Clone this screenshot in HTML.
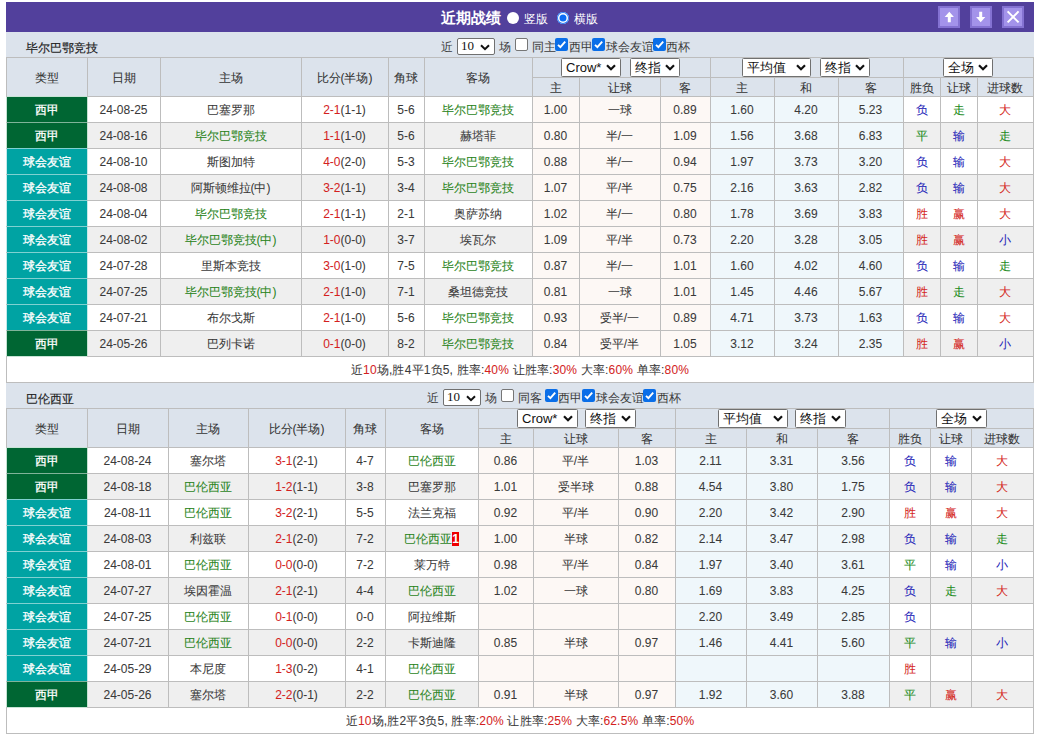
<!DOCTYPE html><html><head><meta charset="utf-8"><style>
*{margin:0;padding:0;box-sizing:border-box}
html,body{width:1037px;height:736px;overflow:hidden;background:#fff}
body{position:relative;font-family:"Liberation Sans",sans-serif;font-size:12px;color:#333}
body>div{position:absolute}
.c{text-align:center;white-space:nowrap;overflow:visible;-webkit-text-stroke:0.06px currentColor}
.t{position:absolute;white-space:nowrap;line-height:14px}
.sel{position:absolute;background:#fff;border:1px solid #707070;border-radius:1.5px}
.sel .st{position:absolute;left:4px;top:0;color:#111;white-space:nowrap}
.sel2{position:absolute;width:38px;height:17px;background:#fff;border:1px solid #707070;border-radius:2px;font-family:"Liberation Serif",serif;font-size:13px;line-height:14px;padding-left:3px;color:#111}
.cb{position:absolute;width:13px;height:13px;border:1px solid #767676;border-radius:2px;background:#fff}
.cb.on{background:#0a6ee8;border:none}
.cb svg{position:absolute;left:0;top:0}
.radio{position:absolute;width:12px;height:12px;border-radius:50%;background:#fff}
.radio.on{background:#0a6cf5;box-shadow:inset 0 0 0 1px #2a7af5,inset 0 0 0 2.5px #fff}
.btn{position:absolute;width:22px;height:22px;background:#a393ea;border:2px solid #8472d2}
.btn svg{position:absolute;left:-2px;top:-2px}
.badge{display:inline-block;position:relative;top:-1px;background:#e00;color:#fff;font-weight:bold;font-size:12px;line-height:14px;width:7px;text-align:center;vertical-align:middle}
</style></head><body><div style="left:6px;top:2px;width:1028px;height:30px;background:#52409c;"></div><div class="t" style="left:441px;top:11px;font-size:15px;color:#fff;font-weight:bold;">近期战绩</div><div class="radio" style="left:507px;top:12px"></div><div class="t" style="left:524px;top:12px;font-size:12px;color:#fff;">竖版</div><div class="radio on" style="left:557px;top:12px"></div><div class="t" style="left:574px;top:12px;font-size:12px;color:#fff;">横版</div><div class="btn" style="left:938px;top:6px"><svg width="22" height="22" viewBox="0 0 22 22"><path d="M11.3 5.8 L15.9 10.9 L12.8 10.9 L12.8 16.2 L9.8 16.2 L9.8 10.9 L6.7 10.9 Z" fill="#fff"/></svg></div><div class="btn" style="left:970px;top:6px"><svg width="22" height="22" viewBox="0 0 22 22"><path d="M10.7 16.2 L15.3 11.1 L12.2 11.1 L12.2 5.8 L9.2 5.8 L9.2 11.1 L6.1 11.1 Z" fill="#fff"/></svg></div><div class="btn" style="left:1002px;top:6px"><svg width="22" height="22" viewBox="0 0 22 22"><path d="M5.6 5.4 L16.6 16.4 M16.6 5.4 L5.6 16.4" stroke="#fff" stroke-width="2" fill="none"/></svg></div><div style="left:6px;top:32px;width:1028px;height:25px;background:#dce3ec;"></div><div class="t" style="left:26px;top:41px;font-size:12px;color:#222;-webkit-text-stroke:0.15px #222;">毕尔巴鄂竞技</div><div class="t" style="left:441px;top:40px;font-size:12px;color:#3a3a3a;">近</div><div class="sel2" style="left:457px;top:38px">10<svg width="10" height="7" viewBox="0 0 10 7" style="position:absolute;right:4px;top:5px"><path d="M1 1.2 L5 5.2 L9 1.2" stroke="#111" stroke-width="2" fill="none"/></svg></div><div class="t" style="left:499px;top:40px;font-size:12px;color:#3a3a3a;">场</div><div class="cb" style="left:515px;top:38px"></div><div class="t" style="left:532px;top:40px;font-size:12px;color:#3a3a3a;">同主</div><div class="cb on" style="left:555px;top:38px"><svg width="13" height="13" viewBox="0 0 13 13"><path d="M3 6.8 L5.4 9.2 L10.2 3.6" stroke="#fff" stroke-width="1.9" fill="none"/></svg></div><div class="t" style="left:569px;top:40px;font-size:12px;color:#3a3a3a;">西甲</div><div class="cb on" style="left:592px;top:38px"><svg width="13" height="13" viewBox="0 0 13 13"><path d="M3 6.8 L5.4 9.2 L10.2 3.6" stroke="#fff" stroke-width="1.9" fill="none"/></svg></div><div class="t" style="left:606px;top:40px;font-size:12px;color:#3a3a3a;">球会友谊</div><div class="cb on" style="left:653px;top:38px"><svg width="13" height="13" viewBox="0 0 13 13"><path d="M3 6.8 L5.4 9.2 L10.2 3.6" stroke="#fff" stroke-width="1.9" fill="none"/></svg></div><div class="t" style="left:666px;top:40px;font-size:12px;color:#3a3a3a;">西杯</div><div style="left:6px;top:57px;width:1028px;height:39px;background:#dce3ec;"></div><div style="left:6px;top:96px;width:1028px;height:26px;background:#fff;"></div><div style="left:532px;top:96px;width:178px;height:26px;background:#fdf8f5;"></div><div style="left:710px;top:96px;width:193px;height:26px;background:#eff7fb;"></div><div style="left:7px;top:96px;width:80px;height:26px;background:#006633;"></div><div style="left:6px;top:122px;width:1028px;height:26px;background:#efefef;"></div><div style="left:532px;top:122px;width:178px;height:26px;background:#fdf8f5;"></div><div style="left:710px;top:122px;width:193px;height:26px;background:#eff7fb;"></div><div style="left:7px;top:122px;width:80px;height:26px;background:#006633;"></div><div style="left:6px;top:148px;width:1028px;height:26px;background:#fff;"></div><div style="left:532px;top:148px;width:178px;height:26px;background:#fdf8f5;"></div><div style="left:710px;top:148px;width:193px;height:26px;background:#eff7fb;"></div><div style="left:7px;top:148px;width:80px;height:26px;background:#00a3a3;"></div><div style="left:6px;top:174px;width:1028px;height:26px;background:#efefef;"></div><div style="left:532px;top:174px;width:178px;height:26px;background:#fdf8f5;"></div><div style="left:710px;top:174px;width:193px;height:26px;background:#eff7fb;"></div><div style="left:7px;top:174px;width:80px;height:26px;background:#00a3a3;"></div><div style="left:6px;top:200px;width:1028px;height:26px;background:#fff;"></div><div style="left:532px;top:200px;width:178px;height:26px;background:#fdf8f5;"></div><div style="left:710px;top:200px;width:193px;height:26px;background:#eff7fb;"></div><div style="left:7px;top:200px;width:80px;height:26px;background:#00a3a3;"></div><div style="left:6px;top:226px;width:1028px;height:26px;background:#efefef;"></div><div style="left:532px;top:226px;width:178px;height:26px;background:#fdf8f5;"></div><div style="left:710px;top:226px;width:193px;height:26px;background:#eff7fb;"></div><div style="left:7px;top:226px;width:80px;height:26px;background:#00a3a3;"></div><div style="left:6px;top:252px;width:1028px;height:26px;background:#fff;"></div><div style="left:532px;top:252px;width:178px;height:26px;background:#fdf8f5;"></div><div style="left:710px;top:252px;width:193px;height:26px;background:#eff7fb;"></div><div style="left:7px;top:252px;width:80px;height:26px;background:#00a3a3;"></div><div style="left:6px;top:278px;width:1028px;height:26px;background:#efefef;"></div><div style="left:532px;top:278px;width:178px;height:26px;background:#fdf8f5;"></div><div style="left:710px;top:278px;width:193px;height:26px;background:#eff7fb;"></div><div style="left:7px;top:278px;width:80px;height:26px;background:#00a3a3;"></div><div style="left:6px;top:304px;width:1028px;height:26px;background:#fff;"></div><div style="left:532px;top:304px;width:178px;height:26px;background:#fdf8f5;"></div><div style="left:710px;top:304px;width:193px;height:26px;background:#eff7fb;"></div><div style="left:7px;top:304px;width:80px;height:26px;background:#00a3a3;"></div><div style="left:6px;top:330px;width:1028px;height:26px;background:#efefef;"></div><div style="left:532px;top:330px;width:178px;height:26px;background:#fdf8f5;"></div><div style="left:710px;top:330px;width:193px;height:26px;background:#eff7fb;"></div><div style="left:7px;top:330px;width:80px;height:26px;background:#006633;"></div><div style="left:6px;top:356px;width:1028px;height:26px;background:#fff;"></div><div style="left:6px;top:57px;width:1028px;height:1px;background:#bdbdbd"></div><div style="left:532px;top:77px;width:502px;height:1px;background:#bdbdbd"></div><div style="left:6px;top:96px;width:1028px;height:1px;background:#bdbdbd"></div><div style="left:6px;top:122px;width:1028px;height:1px;background:#bdbdbd"></div><div style="left:6px;top:148px;width:1028px;height:1px;background:#bdbdbd"></div><div style="left:6px;top:174px;width:1028px;height:1px;background:#bdbdbd"></div><div style="left:6px;top:200px;width:1028px;height:1px;background:#bdbdbd"></div><div style="left:6px;top:226px;width:1028px;height:1px;background:#bdbdbd"></div><div style="left:6px;top:252px;width:1028px;height:1px;background:#bdbdbd"></div><div style="left:6px;top:278px;width:1028px;height:1px;background:#bdbdbd"></div><div style="left:6px;top:304px;width:1028px;height:1px;background:#bdbdbd"></div><div style="left:6px;top:330px;width:1028px;height:1px;background:#bdbdbd"></div><div style="left:6px;top:356px;width:1028px;height:1px;background:#bdbdbd"></div><div style="left:6px;top:382px;width:1028px;height:1px;background:#bdbdbd"></div><div style="left:6px;top:57px;width:1px;height:300px;background:#bdbdbd"></div><div style="left:87px;top:57px;width:1px;height:300px;background:#bdbdbd"></div><div style="left:160px;top:57px;width:1px;height:300px;background:#bdbdbd"></div><div style="left:301px;top:57px;width:1px;height:300px;background:#bdbdbd"></div><div style="left:388px;top:57px;width:1px;height:300px;background:#bdbdbd"></div><div style="left:424px;top:57px;width:1px;height:300px;background:#bdbdbd"></div><div style="left:532px;top:57px;width:1px;height:300px;background:#bdbdbd"></div><div style="left:579px;top:77px;width:1px;height:280px;background:#bdbdbd"></div><div style="left:660px;top:77px;width:1px;height:280px;background:#bdbdbd"></div><div style="left:710px;top:57px;width:1px;height:300px;background:#bdbdbd"></div><div style="left:774px;top:77px;width:1px;height:280px;background:#bdbdbd"></div><div style="left:838px;top:77px;width:1px;height:280px;background:#bdbdbd"></div><div style="left:903px;top:57px;width:1px;height:300px;background:#bdbdbd"></div><div style="left:940px;top:77px;width:1px;height:280px;background:#bdbdbd"></div><div style="left:977px;top:77px;width:1px;height:280px;background:#bdbdbd"></div><div style="left:1033px;top:57px;width:1px;height:300px;background:#bdbdbd"></div><div style="left:6px;top:356px;width:1px;height:27px;background:#bdbdbd"></div><div style="left:1033px;top:356px;width:1px;height:27px;background:#bdbdbd"></div><div style="left:7px;top:122px;width:80px;height:1px;background:#80b399"></div><div style="left:7px;top:148px;width:80px;height:1px;background:#80d1d1"></div><div style="left:7px;top:174px;width:80px;height:1px;background:#80d1d1"></div><div style="left:7px;top:200px;width:80px;height:1px;background:#80d1d1"></div><div style="left:7px;top:226px;width:80px;height:1px;background:#80d1d1"></div><div style="left:7px;top:252px;width:80px;height:1px;background:#80d1d1"></div><div style="left:7px;top:278px;width:80px;height:1px;background:#80d1d1"></div><div style="left:7px;top:304px;width:80px;height:1px;background:#80d1d1"></div><div style="left:7px;top:330px;width:80px;height:1px;background:#80b399"></div><div style="left:6px;top:97px;width:1px;height:25px;background:#c4e2d2"></div><div style="left:87px;top:97px;width:1px;height:25px;background:#c4e2d2"></div><div style="left:6px;top:123px;width:1px;height:25px;background:#c4e2d2"></div><div style="left:87px;top:123px;width:1px;height:25px;background:#c4e2d2"></div><div style="left:6px;top:149px;width:1px;height:25px;background:#c4eaea"></div><div style="left:87px;top:149px;width:1px;height:25px;background:#c4eaea"></div><div style="left:6px;top:175px;width:1px;height:25px;background:#c4eaea"></div><div style="left:87px;top:175px;width:1px;height:25px;background:#c4eaea"></div><div style="left:6px;top:201px;width:1px;height:25px;background:#c4eaea"></div><div style="left:87px;top:201px;width:1px;height:25px;background:#c4eaea"></div><div style="left:6px;top:227px;width:1px;height:25px;background:#c4eaea"></div><div style="left:87px;top:227px;width:1px;height:25px;background:#c4eaea"></div><div style="left:6px;top:253px;width:1px;height:25px;background:#c4eaea"></div><div style="left:87px;top:253px;width:1px;height:25px;background:#c4eaea"></div><div style="left:6px;top:279px;width:1px;height:25px;background:#c4eaea"></div><div style="left:87px;top:279px;width:1px;height:25px;background:#c4eaea"></div><div style="left:6px;top:305px;width:1px;height:25px;background:#c4eaea"></div><div style="left:87px;top:305px;width:1px;height:25px;background:#c4eaea"></div><div style="left:6px;top:331px;width:1px;height:25px;background:#c4e2d2"></div><div style="left:87px;top:331px;width:1px;height:25px;background:#c4e2d2"></div><div style="left:7px;top:96px;width:80px;height:1px;background:#c8e4d6"></div><div style="left:7px;top:356px;width:80px;height:1px;background:#c8e4d6"></div><div class="c" style="left:6px;top:59px;width:81px;height:39px;line-height:39px;color:#333;font-size:12px;">类型</div><div class="c" style="left:87px;top:59px;width:73px;height:39px;line-height:39px;color:#333;font-size:12px;">日期</div><div class="c" style="left:160px;top:59px;width:141px;height:39px;line-height:39px;color:#333;font-size:12px;">主场</div><div class="c" style="left:301px;top:59px;width:87px;height:39px;line-height:39px;color:#333;font-size:12px;">比分(半场)</div><div class="c" style="left:388px;top:59px;width:36px;height:39px;line-height:39px;color:#333;font-size:12px;">角球</div><div class="c" style="left:424px;top:59px;width:108px;height:39px;line-height:39px;color:#333;font-size:12px;">客场</div><div class="c" style="left:532px;top:79px;width:47px;height:19px;line-height:19px;color:#333;font-size:12px;">主</div><div class="c" style="left:579px;top:79px;width:81px;height:19px;line-height:19px;color:#333;font-size:12px;">让球</div><div class="c" style="left:660px;top:79px;width:50px;height:19px;line-height:19px;color:#333;font-size:12px;">客</div><div class="c" style="left:710px;top:79px;width:64px;height:19px;line-height:19px;color:#333;font-size:12px;">主</div><div class="c" style="left:774px;top:79px;width:64px;height:19px;line-height:19px;color:#333;font-size:12px;">和</div><div class="c" style="left:838px;top:79px;width:65px;height:19px;line-height:19px;color:#333;font-size:12px;">客</div><div class="c" style="left:903px;top:79px;width:37px;height:19px;line-height:19px;color:#333;font-size:12px;">胜负</div><div class="c" style="left:940px;top:79px;width:37px;height:19px;line-height:19px;color:#333;font-size:12px;">让球</div><div class="c" style="left:977px;top:79px;width:56px;height:19px;line-height:19px;color:#333;font-size:12px;">进球数</div><div class="sel" style="left:561px;top:58px;width:60px;height:19px;"><span class="st" style="font-size:13px;line-height:17px">Crow*</span><svg class="chev" width="10" height="7" viewBox="0 0 10 7" style="position:absolute;right:4px;top:5px"><path d="M1 1.3 L5 5.3 L9 1.3" stroke="#111" stroke-width="2.2" fill="none"/></svg></div><div class="sel" style="left:630px;top:58px;width:50px;height:19px;"><span class="st" style="font-size:13px;line-height:17px">终指</span><svg class="chev" width="10" height="7" viewBox="0 0 10 7" style="position:absolute;right:4px;top:5px"><path d="M1 1.3 L5 5.3 L9 1.3" stroke="#111" stroke-width="2.2" fill="none"/></svg></div><div class="sel" style="left:742px;top:58px;width:69px;height:19px;"><span class="st" style="font-size:13px;line-height:17px">平均值</span><svg class="chev" width="10" height="7" viewBox="0 0 10 7" style="position:absolute;right:4px;top:5px"><path d="M1 1.3 L5 5.3 L9 1.3" stroke="#111" stroke-width="2.2" fill="none"/></svg></div><div class="sel" style="left:820px;top:58px;width:50px;height:19px;"><span class="st" style="font-size:13px;line-height:17px">终指</span><svg class="chev" width="10" height="7" viewBox="0 0 10 7" style="position:absolute;right:4px;top:5px"><path d="M1 1.3 L5 5.3 L9 1.3" stroke="#111" stroke-width="2.2" fill="none"/></svg></div><div class="sel" style="left:943px;top:58px;width:50px;height:19px;"><span class="st" style="font-size:13px;line-height:17px">全场</span><svg class="chev" width="10" height="7" viewBox="0 0 10 7" style="position:absolute;right:4px;top:5px"><path d="M1 1.3 L5 5.3 L9 1.3" stroke="#111" stroke-width="2.2" fill="none"/></svg></div><div class="c" style="left:6px;top:97px;width:81px;height:26px;line-height:26px;color:#fff;font-size:12px;-webkit-text-stroke:0.3px #fff;">西甲</div><div class="c" style="left:87px;top:97px;width:73px;height:26px;line-height:26px;color:#3a3a3a;font-size:12px;">24-08-25</div><div class="c" style="left:160px;top:97px;width:141px;height:26px;line-height:26px;color:#3a3a3a;font-size:12px;">巴塞罗那</div><div class="c" style="left:301px;top:97px;width:87px;height:26px;line-height:26px;color:#3a3a3a;font-size:12px;"><span style="color:#d41f1f">2-1</span>(1-1)</div><div class="c" style="left:388px;top:97px;width:36px;height:26px;line-height:26px;color:#3a3a3a;font-size:12px;">5-6</div><div class="c" style="left:424px;top:97px;width:108px;height:26px;line-height:26px;color:#3a3a3a;font-size:12px;"><span style="color:#2b851c">毕尔巴鄂竞技</span></div><div class="c" style="left:532px;top:97px;width:47px;height:26px;line-height:26px;color:#3a3a3a;font-size:12px;">1.00</div><div class="c" style="left:579px;top:97px;width:81px;height:26px;line-height:26px;color:#3a3a3a;font-size:12px;">一球</div><div class="c" style="left:660px;top:97px;width:50px;height:26px;line-height:26px;color:#3a3a3a;font-size:12px;">0.89</div><div class="c" style="left:710px;top:97px;width:64px;height:26px;line-height:26px;color:#3a3a3a;font-size:12px;">1.60</div><div class="c" style="left:774px;top:97px;width:64px;height:26px;line-height:26px;color:#3a3a3a;font-size:12px;">4.20</div><div class="c" style="left:838px;top:97px;width:65px;height:26px;line-height:26px;color:#3a3a3a;font-size:12px;">5.23</div><div class="c" style="left:903px;top:97px;width:37px;height:26px;line-height:26px;color:#1e1eb8;font-size:12px;">负</div><div class="c" style="left:940px;top:97px;width:37px;height:26px;line-height:26px;color:#178a17;font-size:12px;">走</div><div class="c" style="left:977px;top:97px;width:56px;height:26px;line-height:26px;color:#d4261a;font-size:12px;">大</div><div class="c" style="left:6px;top:123px;width:81px;height:26px;line-height:26px;color:#fff;font-size:12px;-webkit-text-stroke:0.3px #fff;">西甲</div><div class="c" style="left:87px;top:123px;width:73px;height:26px;line-height:26px;color:#3a3a3a;font-size:12px;">24-08-16</div><div class="c" style="left:160px;top:123px;width:141px;height:26px;line-height:26px;color:#3a3a3a;font-size:12px;"><span style="color:#2b851c">毕尔巴鄂竞技</span></div><div class="c" style="left:301px;top:123px;width:87px;height:26px;line-height:26px;color:#3a3a3a;font-size:12px;"><span style="color:#d41f1f">1-1</span>(1-0)</div><div class="c" style="left:388px;top:123px;width:36px;height:26px;line-height:26px;color:#3a3a3a;font-size:12px;">5-6</div><div class="c" style="left:424px;top:123px;width:108px;height:26px;line-height:26px;color:#3a3a3a;font-size:12px;">赫塔菲</div><div class="c" style="left:532px;top:123px;width:47px;height:26px;line-height:26px;color:#3a3a3a;font-size:12px;">0.80</div><div class="c" style="left:579px;top:123px;width:81px;height:26px;line-height:26px;color:#3a3a3a;font-size:12px;">半/一</div><div class="c" style="left:660px;top:123px;width:50px;height:26px;line-height:26px;color:#3a3a3a;font-size:12px;">1.09</div><div class="c" style="left:710px;top:123px;width:64px;height:26px;line-height:26px;color:#3a3a3a;font-size:12px;">1.56</div><div class="c" style="left:774px;top:123px;width:64px;height:26px;line-height:26px;color:#3a3a3a;font-size:12px;">3.68</div><div class="c" style="left:838px;top:123px;width:65px;height:26px;line-height:26px;color:#3a3a3a;font-size:12px;">6.83</div><div class="c" style="left:903px;top:123px;width:37px;height:26px;line-height:26px;color:#178a17;font-size:12px;">平</div><div class="c" style="left:940px;top:123px;width:37px;height:26px;line-height:26px;color:#1e1eb8;font-size:12px;">输</div><div class="c" style="left:977px;top:123px;width:56px;height:26px;line-height:26px;color:#178a17;font-size:12px;">走</div><div class="c" style="left:6px;top:149px;width:81px;height:26px;line-height:26px;color:#fff;font-size:12px;-webkit-text-stroke:0.3px #fff;">球会友谊</div><div class="c" style="left:87px;top:149px;width:73px;height:26px;line-height:26px;color:#3a3a3a;font-size:12px;">24-08-10</div><div class="c" style="left:160px;top:149px;width:141px;height:26px;line-height:26px;color:#3a3a3a;font-size:12px;">斯图加特</div><div class="c" style="left:301px;top:149px;width:87px;height:26px;line-height:26px;color:#3a3a3a;font-size:12px;"><span style="color:#d41f1f">4-0</span>(2-0)</div><div class="c" style="left:388px;top:149px;width:36px;height:26px;line-height:26px;color:#3a3a3a;font-size:12px;">5-3</div><div class="c" style="left:424px;top:149px;width:108px;height:26px;line-height:26px;color:#3a3a3a;font-size:12px;"><span style="color:#2b851c">毕尔巴鄂竞技</span></div><div class="c" style="left:532px;top:149px;width:47px;height:26px;line-height:26px;color:#3a3a3a;font-size:12px;">0.88</div><div class="c" style="left:579px;top:149px;width:81px;height:26px;line-height:26px;color:#3a3a3a;font-size:12px;">半/一</div><div class="c" style="left:660px;top:149px;width:50px;height:26px;line-height:26px;color:#3a3a3a;font-size:12px;">0.94</div><div class="c" style="left:710px;top:149px;width:64px;height:26px;line-height:26px;color:#3a3a3a;font-size:12px;">1.97</div><div class="c" style="left:774px;top:149px;width:64px;height:26px;line-height:26px;color:#3a3a3a;font-size:12px;">3.73</div><div class="c" style="left:838px;top:149px;width:65px;height:26px;line-height:26px;color:#3a3a3a;font-size:12px;">3.20</div><div class="c" style="left:903px;top:149px;width:37px;height:26px;line-height:26px;color:#1e1eb8;font-size:12px;">负</div><div class="c" style="left:940px;top:149px;width:37px;height:26px;line-height:26px;color:#1e1eb8;font-size:12px;">输</div><div class="c" style="left:977px;top:149px;width:56px;height:26px;line-height:26px;color:#d4261a;font-size:12px;">大</div><div class="c" style="left:6px;top:175px;width:81px;height:26px;line-height:26px;color:#fff;font-size:12px;-webkit-text-stroke:0.3px #fff;">球会友谊</div><div class="c" style="left:87px;top:175px;width:73px;height:26px;line-height:26px;color:#3a3a3a;font-size:12px;">24-08-08</div><div class="c" style="left:160px;top:175px;width:141px;height:26px;line-height:26px;color:#3a3a3a;font-size:12px;">阿斯顿维拉(中)</div><div class="c" style="left:301px;top:175px;width:87px;height:26px;line-height:26px;color:#3a3a3a;font-size:12px;"><span style="color:#d41f1f">3-2</span>(1-1)</div><div class="c" style="left:388px;top:175px;width:36px;height:26px;line-height:26px;color:#3a3a3a;font-size:12px;">3-4</div><div class="c" style="left:424px;top:175px;width:108px;height:26px;line-height:26px;color:#3a3a3a;font-size:12px;"><span style="color:#2b851c">毕尔巴鄂竞技</span></div><div class="c" style="left:532px;top:175px;width:47px;height:26px;line-height:26px;color:#3a3a3a;font-size:12px;">1.07</div><div class="c" style="left:579px;top:175px;width:81px;height:26px;line-height:26px;color:#3a3a3a;font-size:12px;">平/半</div><div class="c" style="left:660px;top:175px;width:50px;height:26px;line-height:26px;color:#3a3a3a;font-size:12px;">0.75</div><div class="c" style="left:710px;top:175px;width:64px;height:26px;line-height:26px;color:#3a3a3a;font-size:12px;">2.16</div><div class="c" style="left:774px;top:175px;width:64px;height:26px;line-height:26px;color:#3a3a3a;font-size:12px;">3.63</div><div class="c" style="left:838px;top:175px;width:65px;height:26px;line-height:26px;color:#3a3a3a;font-size:12px;">2.82</div><div class="c" style="left:903px;top:175px;width:37px;height:26px;line-height:26px;color:#1e1eb8;font-size:12px;">负</div><div class="c" style="left:940px;top:175px;width:37px;height:26px;line-height:26px;color:#1e1eb8;font-size:12px;">输</div><div class="c" style="left:977px;top:175px;width:56px;height:26px;line-height:26px;color:#d4261a;font-size:12px;">大</div><div class="c" style="left:6px;top:201px;width:81px;height:26px;line-height:26px;color:#fff;font-size:12px;-webkit-text-stroke:0.3px #fff;">球会友谊</div><div class="c" style="left:87px;top:201px;width:73px;height:26px;line-height:26px;color:#3a3a3a;font-size:12px;">24-08-04</div><div class="c" style="left:160px;top:201px;width:141px;height:26px;line-height:26px;color:#3a3a3a;font-size:12px;"><span style="color:#2b851c">毕尔巴鄂竞技</span></div><div class="c" style="left:301px;top:201px;width:87px;height:26px;line-height:26px;color:#3a3a3a;font-size:12px;"><span style="color:#d41f1f">2-1</span>(1-1)</div><div class="c" style="left:388px;top:201px;width:36px;height:26px;line-height:26px;color:#3a3a3a;font-size:12px;">2-1</div><div class="c" style="left:424px;top:201px;width:108px;height:26px;line-height:26px;color:#3a3a3a;font-size:12px;">奥萨苏纳</div><div class="c" style="left:532px;top:201px;width:47px;height:26px;line-height:26px;color:#3a3a3a;font-size:12px;">1.02</div><div class="c" style="left:579px;top:201px;width:81px;height:26px;line-height:26px;color:#3a3a3a;font-size:12px;">半/一</div><div class="c" style="left:660px;top:201px;width:50px;height:26px;line-height:26px;color:#3a3a3a;font-size:12px;">0.80</div><div class="c" style="left:710px;top:201px;width:64px;height:26px;line-height:26px;color:#3a3a3a;font-size:12px;">1.78</div><div class="c" style="left:774px;top:201px;width:64px;height:26px;line-height:26px;color:#3a3a3a;font-size:12px;">3.69</div><div class="c" style="left:838px;top:201px;width:65px;height:26px;line-height:26px;color:#3a3a3a;font-size:12px;">3.83</div><div class="c" style="left:903px;top:201px;width:37px;height:26px;line-height:26px;color:#d4261a;font-size:12px;">胜</div><div class="c" style="left:940px;top:201px;width:37px;height:26px;line-height:26px;color:#d4261a;font-size:12px;">赢</div><div class="c" style="left:977px;top:201px;width:56px;height:26px;line-height:26px;color:#d4261a;font-size:12px;">大</div><div class="c" style="left:6px;top:227px;width:81px;height:26px;line-height:26px;color:#fff;font-size:12px;-webkit-text-stroke:0.3px #fff;">球会友谊</div><div class="c" style="left:87px;top:227px;width:73px;height:26px;line-height:26px;color:#3a3a3a;font-size:12px;">24-08-02</div><div class="c" style="left:160px;top:227px;width:141px;height:26px;line-height:26px;color:#3a3a3a;font-size:12px;"><span style="color:#2b851c">毕尔巴鄂竞技(中)</span></div><div class="c" style="left:301px;top:227px;width:87px;height:26px;line-height:26px;color:#3a3a3a;font-size:12px;"><span style="color:#d41f1f">1-0</span>(0-0)</div><div class="c" style="left:388px;top:227px;width:36px;height:26px;line-height:26px;color:#3a3a3a;font-size:12px;">3-7</div><div class="c" style="left:424px;top:227px;width:108px;height:26px;line-height:26px;color:#3a3a3a;font-size:12px;">埃瓦尔</div><div class="c" style="left:532px;top:227px;width:47px;height:26px;line-height:26px;color:#3a3a3a;font-size:12px;">1.09</div><div class="c" style="left:579px;top:227px;width:81px;height:26px;line-height:26px;color:#3a3a3a;font-size:12px;">平/半</div><div class="c" style="left:660px;top:227px;width:50px;height:26px;line-height:26px;color:#3a3a3a;font-size:12px;">0.73</div><div class="c" style="left:710px;top:227px;width:64px;height:26px;line-height:26px;color:#3a3a3a;font-size:12px;">2.20</div><div class="c" style="left:774px;top:227px;width:64px;height:26px;line-height:26px;color:#3a3a3a;font-size:12px;">3.28</div><div class="c" style="left:838px;top:227px;width:65px;height:26px;line-height:26px;color:#3a3a3a;font-size:12px;">3.05</div><div class="c" style="left:903px;top:227px;width:37px;height:26px;line-height:26px;color:#d4261a;font-size:12px;">胜</div><div class="c" style="left:940px;top:227px;width:37px;height:26px;line-height:26px;color:#d4261a;font-size:12px;">赢</div><div class="c" style="left:977px;top:227px;width:56px;height:26px;line-height:26px;color:#1e1eb8;font-size:12px;">小</div><div class="c" style="left:6px;top:253px;width:81px;height:26px;line-height:26px;color:#fff;font-size:12px;-webkit-text-stroke:0.3px #fff;">球会友谊</div><div class="c" style="left:87px;top:253px;width:73px;height:26px;line-height:26px;color:#3a3a3a;font-size:12px;">24-07-28</div><div class="c" style="left:160px;top:253px;width:141px;height:26px;line-height:26px;color:#3a3a3a;font-size:12px;">里斯本竞技</div><div class="c" style="left:301px;top:253px;width:87px;height:26px;line-height:26px;color:#3a3a3a;font-size:12px;"><span style="color:#d41f1f">3-0</span>(1-0)</div><div class="c" style="left:388px;top:253px;width:36px;height:26px;line-height:26px;color:#3a3a3a;font-size:12px;">7-5</div><div class="c" style="left:424px;top:253px;width:108px;height:26px;line-height:26px;color:#3a3a3a;font-size:12px;"><span style="color:#2b851c">毕尔巴鄂竞技</span></div><div class="c" style="left:532px;top:253px;width:47px;height:26px;line-height:26px;color:#3a3a3a;font-size:12px;">0.87</div><div class="c" style="left:579px;top:253px;width:81px;height:26px;line-height:26px;color:#3a3a3a;font-size:12px;">半/一</div><div class="c" style="left:660px;top:253px;width:50px;height:26px;line-height:26px;color:#3a3a3a;font-size:12px;">1.01</div><div class="c" style="left:710px;top:253px;width:64px;height:26px;line-height:26px;color:#3a3a3a;font-size:12px;">1.60</div><div class="c" style="left:774px;top:253px;width:64px;height:26px;line-height:26px;color:#3a3a3a;font-size:12px;">4.02</div><div class="c" style="left:838px;top:253px;width:65px;height:26px;line-height:26px;color:#3a3a3a;font-size:12px;">4.60</div><div class="c" style="left:903px;top:253px;width:37px;height:26px;line-height:26px;color:#1e1eb8;font-size:12px;">负</div><div class="c" style="left:940px;top:253px;width:37px;height:26px;line-height:26px;color:#1e1eb8;font-size:12px;">输</div><div class="c" style="left:977px;top:253px;width:56px;height:26px;line-height:26px;color:#178a17;font-size:12px;">走</div><div class="c" style="left:6px;top:279px;width:81px;height:26px;line-height:26px;color:#fff;font-size:12px;-webkit-text-stroke:0.3px #fff;">球会友谊</div><div class="c" style="left:87px;top:279px;width:73px;height:26px;line-height:26px;color:#3a3a3a;font-size:12px;">24-07-25</div><div class="c" style="left:160px;top:279px;width:141px;height:26px;line-height:26px;color:#3a3a3a;font-size:12px;"><span style="color:#2b851c">毕尔巴鄂竞技(中)</span></div><div class="c" style="left:301px;top:279px;width:87px;height:26px;line-height:26px;color:#3a3a3a;font-size:12px;"><span style="color:#d41f1f">2-1</span>(1-0)</div><div class="c" style="left:388px;top:279px;width:36px;height:26px;line-height:26px;color:#3a3a3a;font-size:12px;">7-1</div><div class="c" style="left:424px;top:279px;width:108px;height:26px;line-height:26px;color:#3a3a3a;font-size:12px;">桑坦德竞技</div><div class="c" style="left:532px;top:279px;width:47px;height:26px;line-height:26px;color:#3a3a3a;font-size:12px;">0.81</div><div class="c" style="left:579px;top:279px;width:81px;height:26px;line-height:26px;color:#3a3a3a;font-size:12px;">一球</div><div class="c" style="left:660px;top:279px;width:50px;height:26px;line-height:26px;color:#3a3a3a;font-size:12px;">1.01</div><div class="c" style="left:710px;top:279px;width:64px;height:26px;line-height:26px;color:#3a3a3a;font-size:12px;">1.45</div><div class="c" style="left:774px;top:279px;width:64px;height:26px;line-height:26px;color:#3a3a3a;font-size:12px;">4.46</div><div class="c" style="left:838px;top:279px;width:65px;height:26px;line-height:26px;color:#3a3a3a;font-size:12px;">5.67</div><div class="c" style="left:903px;top:279px;width:37px;height:26px;line-height:26px;color:#d4261a;font-size:12px;">胜</div><div class="c" style="left:940px;top:279px;width:37px;height:26px;line-height:26px;color:#178a17;font-size:12px;">走</div><div class="c" style="left:977px;top:279px;width:56px;height:26px;line-height:26px;color:#d4261a;font-size:12px;">大</div><div class="c" style="left:6px;top:305px;width:81px;height:26px;line-height:26px;color:#fff;font-size:12px;-webkit-text-stroke:0.3px #fff;">球会友谊</div><div class="c" style="left:87px;top:305px;width:73px;height:26px;line-height:26px;color:#3a3a3a;font-size:12px;">24-07-21</div><div class="c" style="left:160px;top:305px;width:141px;height:26px;line-height:26px;color:#3a3a3a;font-size:12px;">布尔戈斯</div><div class="c" style="left:301px;top:305px;width:87px;height:26px;line-height:26px;color:#3a3a3a;font-size:12px;"><span style="color:#d41f1f">2-1</span>(1-0)</div><div class="c" style="left:388px;top:305px;width:36px;height:26px;line-height:26px;color:#3a3a3a;font-size:12px;">5-6</div><div class="c" style="left:424px;top:305px;width:108px;height:26px;line-height:26px;color:#3a3a3a;font-size:12px;"><span style="color:#2b851c">毕尔巴鄂竞技</span></div><div class="c" style="left:532px;top:305px;width:47px;height:26px;line-height:26px;color:#3a3a3a;font-size:12px;">0.93</div><div class="c" style="left:579px;top:305px;width:81px;height:26px;line-height:26px;color:#3a3a3a;font-size:12px;">受半/一</div><div class="c" style="left:660px;top:305px;width:50px;height:26px;line-height:26px;color:#3a3a3a;font-size:12px;">0.89</div><div class="c" style="left:710px;top:305px;width:64px;height:26px;line-height:26px;color:#3a3a3a;font-size:12px;">4.71</div><div class="c" style="left:774px;top:305px;width:64px;height:26px;line-height:26px;color:#3a3a3a;font-size:12px;">3.73</div><div class="c" style="left:838px;top:305px;width:65px;height:26px;line-height:26px;color:#3a3a3a;font-size:12px;">1.63</div><div class="c" style="left:903px;top:305px;width:37px;height:26px;line-height:26px;color:#1e1eb8;font-size:12px;">负</div><div class="c" style="left:940px;top:305px;width:37px;height:26px;line-height:26px;color:#1e1eb8;font-size:12px;">输</div><div class="c" style="left:977px;top:305px;width:56px;height:26px;line-height:26px;color:#d4261a;font-size:12px;">大</div><div class="c" style="left:6px;top:331px;width:81px;height:26px;line-height:26px;color:#fff;font-size:12px;-webkit-text-stroke:0.3px #fff;">西甲</div><div class="c" style="left:87px;top:331px;width:73px;height:26px;line-height:26px;color:#3a3a3a;font-size:12px;">24-05-26</div><div class="c" style="left:160px;top:331px;width:141px;height:26px;line-height:26px;color:#3a3a3a;font-size:12px;">巴列卡诺</div><div class="c" style="left:301px;top:331px;width:87px;height:26px;line-height:26px;color:#3a3a3a;font-size:12px;"><span style="color:#d41f1f">0-1</span>(0-0)</div><div class="c" style="left:388px;top:331px;width:36px;height:26px;line-height:26px;color:#3a3a3a;font-size:12px;">8-2</div><div class="c" style="left:424px;top:331px;width:108px;height:26px;line-height:26px;color:#3a3a3a;font-size:12px;"><span style="color:#2b851c">毕尔巴鄂竞技</span></div><div class="c" style="left:532px;top:331px;width:47px;height:26px;line-height:26px;color:#3a3a3a;font-size:12px;">0.84</div><div class="c" style="left:579px;top:331px;width:81px;height:26px;line-height:26px;color:#3a3a3a;font-size:12px;">受平/半</div><div class="c" style="left:660px;top:331px;width:50px;height:26px;line-height:26px;color:#3a3a3a;font-size:12px;">1.05</div><div class="c" style="left:710px;top:331px;width:64px;height:26px;line-height:26px;color:#3a3a3a;font-size:12px;">3.12</div><div class="c" style="left:774px;top:331px;width:64px;height:26px;line-height:26px;color:#3a3a3a;font-size:12px;">3.24</div><div class="c" style="left:838px;top:331px;width:65px;height:26px;line-height:26px;color:#3a3a3a;font-size:12px;">2.35</div><div class="c" style="left:903px;top:331px;width:37px;height:26px;line-height:26px;color:#d4261a;font-size:12px;">胜</div><div class="c" style="left:940px;top:331px;width:37px;height:26px;line-height:26px;color:#d4261a;font-size:12px;">赢</div><div class="c" style="left:977px;top:331px;width:56px;height:26px;line-height:26px;color:#1e1eb8;font-size:12px;">小</div><div class="c" style="left:6px;top:357px;width:1028px;height:26px;line-height:26px;color:#3a3a3a;font-size:12px;letter-spacing:0.18px;">近<span style="color:#d41f1f">10</span>场,胜4平1负5, 胜率:<span style="color:#d41f1f">40%</span> 让胜率:<span style="color:#d41f1f">30%</span> 大率:<span style="color:#d41f1f">60%</span> 单率:<span style="color:#d41f1f">80%</span></div><div style="left:6px;top:383px;width:1028px;height:25px;background:#dce3ec;"></div><div class="t" style="left:26px;top:392px;font-size:12px;color:#222;-webkit-text-stroke:0.15px #222;">巴伦西亚</div><div class="t" style="left:427px;top:391px;font-size:12px;color:#3a3a3a;">近</div><div class="sel2" style="left:443px;top:389px">10<svg width="10" height="7" viewBox="0 0 10 7" style="position:absolute;right:4px;top:5px"><path d="M1 1.2 L5 5.2 L9 1.2" stroke="#111" stroke-width="2" fill="none"/></svg></div><div class="t" style="left:485px;top:391px;font-size:12px;color:#3a3a3a;">场</div><div class="cb" style="left:501px;top:389px"></div><div class="t" style="left:518px;top:391px;font-size:12px;color:#3a3a3a;">同客</div><div class="cb on" style="left:545px;top:389px"><svg width="13" height="13" viewBox="0 0 13 13"><path d="M3 6.8 L5.4 9.2 L10.2 3.6" stroke="#fff" stroke-width="1.9" fill="none"/></svg></div><div class="t" style="left:558px;top:391px;font-size:12px;color:#3a3a3a;">西甲</div><div class="cb on" style="left:582px;top:389px"><svg width="13" height="13" viewBox="0 0 13 13"><path d="M3 6.8 L5.4 9.2 L10.2 3.6" stroke="#fff" stroke-width="1.9" fill="none"/></svg></div><div class="t" style="left:596px;top:391px;font-size:12px;color:#3a3a3a;">球会友谊</div><div class="cb on" style="left:643px;top:389px"><svg width="13" height="13" viewBox="0 0 13 13"><path d="M3 6.8 L5.4 9.2 L10.2 3.6" stroke="#fff" stroke-width="1.9" fill="none"/></svg></div><div class="t" style="left:657px;top:391px;font-size:12px;color:#3a3a3a;">西杯</div><div style="left:6px;top:408px;width:1028px;height:39px;background:#dce3ec;"></div><div style="left:6px;top:447px;width:1028px;height:26px;background:#fff;"></div><div style="left:478px;top:447px;width:197px;height:26px;background:#fdf8f5;"></div><div style="left:675px;top:447px;width:214px;height:26px;background:#eff7fb;"></div><div style="left:7px;top:447px;width:80px;height:26px;background:#006633;"></div><div style="left:6px;top:473px;width:1028px;height:26px;background:#efefef;"></div><div style="left:478px;top:473px;width:197px;height:26px;background:#fdf8f5;"></div><div style="left:675px;top:473px;width:214px;height:26px;background:#eff7fb;"></div><div style="left:7px;top:473px;width:80px;height:26px;background:#006633;"></div><div style="left:6px;top:499px;width:1028px;height:26px;background:#fff;"></div><div style="left:478px;top:499px;width:197px;height:26px;background:#fdf8f5;"></div><div style="left:675px;top:499px;width:214px;height:26px;background:#eff7fb;"></div><div style="left:7px;top:499px;width:80px;height:26px;background:#00a3a3;"></div><div style="left:6px;top:525px;width:1028px;height:26px;background:#efefef;"></div><div style="left:478px;top:525px;width:197px;height:26px;background:#fdf8f5;"></div><div style="left:675px;top:525px;width:214px;height:26px;background:#eff7fb;"></div><div style="left:7px;top:525px;width:80px;height:26px;background:#00a3a3;"></div><div style="left:6px;top:551px;width:1028px;height:26px;background:#fff;"></div><div style="left:478px;top:551px;width:197px;height:26px;background:#fdf8f5;"></div><div style="left:675px;top:551px;width:214px;height:26px;background:#eff7fb;"></div><div style="left:7px;top:551px;width:80px;height:26px;background:#00a3a3;"></div><div style="left:6px;top:577px;width:1028px;height:26px;background:#efefef;"></div><div style="left:478px;top:577px;width:197px;height:26px;background:#fdf8f5;"></div><div style="left:675px;top:577px;width:214px;height:26px;background:#eff7fb;"></div><div style="left:7px;top:577px;width:80px;height:26px;background:#00a3a3;"></div><div style="left:6px;top:603px;width:1028px;height:26px;background:#fff;"></div><div style="left:478px;top:603px;width:197px;height:26px;background:#fdf8f5;"></div><div style="left:675px;top:603px;width:214px;height:26px;background:#eff7fb;"></div><div style="left:7px;top:603px;width:80px;height:26px;background:#00a3a3;"></div><div style="left:6px;top:629px;width:1028px;height:26px;background:#efefef;"></div><div style="left:478px;top:629px;width:197px;height:26px;background:#fdf8f5;"></div><div style="left:675px;top:629px;width:214px;height:26px;background:#eff7fb;"></div><div style="left:7px;top:629px;width:80px;height:26px;background:#00a3a3;"></div><div style="left:6px;top:655px;width:1028px;height:26px;background:#fff;"></div><div style="left:478px;top:655px;width:197px;height:26px;background:#fdf8f5;"></div><div style="left:675px;top:655px;width:214px;height:26px;background:#eff7fb;"></div><div style="left:7px;top:655px;width:80px;height:26px;background:#00a3a3;"></div><div style="left:6px;top:681px;width:1028px;height:26px;background:#efefef;"></div><div style="left:478px;top:681px;width:197px;height:26px;background:#fdf8f5;"></div><div style="left:675px;top:681px;width:214px;height:26px;background:#eff7fb;"></div><div style="left:7px;top:681px;width:80px;height:26px;background:#006633;"></div><div style="left:6px;top:707px;width:1028px;height:26px;background:#fff;"></div><div style="left:6px;top:408px;width:1028px;height:1px;background:#bdbdbd"></div><div style="left:478px;top:428px;width:556px;height:1px;background:#bdbdbd"></div><div style="left:6px;top:447px;width:1028px;height:1px;background:#bdbdbd"></div><div style="left:6px;top:473px;width:1028px;height:1px;background:#bdbdbd"></div><div style="left:6px;top:499px;width:1028px;height:1px;background:#bdbdbd"></div><div style="left:6px;top:525px;width:1028px;height:1px;background:#bdbdbd"></div><div style="left:6px;top:551px;width:1028px;height:1px;background:#bdbdbd"></div><div style="left:6px;top:577px;width:1028px;height:1px;background:#bdbdbd"></div><div style="left:6px;top:603px;width:1028px;height:1px;background:#bdbdbd"></div><div style="left:6px;top:629px;width:1028px;height:1px;background:#bdbdbd"></div><div style="left:6px;top:655px;width:1028px;height:1px;background:#bdbdbd"></div><div style="left:6px;top:681px;width:1028px;height:1px;background:#bdbdbd"></div><div style="left:6px;top:707px;width:1028px;height:1px;background:#bdbdbd"></div><div style="left:6px;top:733px;width:1028px;height:1px;background:#bdbdbd"></div><div style="left:6px;top:408px;width:1px;height:300px;background:#bdbdbd"></div><div style="left:87px;top:408px;width:1px;height:300px;background:#bdbdbd"></div><div style="left:168px;top:408px;width:1px;height:300px;background:#bdbdbd"></div><div style="left:248px;top:408px;width:1px;height:300px;background:#bdbdbd"></div><div style="left:345px;top:408px;width:1px;height:300px;background:#bdbdbd"></div><div style="left:385px;top:408px;width:1px;height:300px;background:#bdbdbd"></div><div style="left:478px;top:408px;width:1px;height:300px;background:#bdbdbd"></div><div style="left:533px;top:428px;width:1px;height:280px;background:#bdbdbd"></div><div style="left:618px;top:428px;width:1px;height:280px;background:#bdbdbd"></div><div style="left:675px;top:408px;width:1px;height:300px;background:#bdbdbd"></div><div style="left:746px;top:428px;width:1px;height:280px;background:#bdbdbd"></div><div style="left:817px;top:428px;width:1px;height:280px;background:#bdbdbd"></div><div style="left:889px;top:408px;width:1px;height:300px;background:#bdbdbd"></div><div style="left:930px;top:428px;width:1px;height:280px;background:#bdbdbd"></div><div style="left:971px;top:428px;width:1px;height:280px;background:#bdbdbd"></div><div style="left:1033px;top:408px;width:1px;height:300px;background:#bdbdbd"></div><div style="left:6px;top:707px;width:1px;height:27px;background:#bdbdbd"></div><div style="left:1033px;top:707px;width:1px;height:27px;background:#bdbdbd"></div><div style="left:7px;top:473px;width:80px;height:1px;background:#80b399"></div><div style="left:7px;top:499px;width:80px;height:1px;background:#80d1d1"></div><div style="left:7px;top:525px;width:80px;height:1px;background:#80d1d1"></div><div style="left:7px;top:551px;width:80px;height:1px;background:#80d1d1"></div><div style="left:7px;top:577px;width:80px;height:1px;background:#80d1d1"></div><div style="left:7px;top:603px;width:80px;height:1px;background:#80d1d1"></div><div style="left:7px;top:629px;width:80px;height:1px;background:#80d1d1"></div><div style="left:7px;top:655px;width:80px;height:1px;background:#80d1d1"></div><div style="left:7px;top:681px;width:80px;height:1px;background:#80b399"></div><div style="left:6px;top:448px;width:1px;height:25px;background:#c4e2d2"></div><div style="left:87px;top:448px;width:1px;height:25px;background:#c4e2d2"></div><div style="left:6px;top:474px;width:1px;height:25px;background:#c4e2d2"></div><div style="left:87px;top:474px;width:1px;height:25px;background:#c4e2d2"></div><div style="left:6px;top:500px;width:1px;height:25px;background:#c4eaea"></div><div style="left:87px;top:500px;width:1px;height:25px;background:#c4eaea"></div><div style="left:6px;top:526px;width:1px;height:25px;background:#c4eaea"></div><div style="left:87px;top:526px;width:1px;height:25px;background:#c4eaea"></div><div style="left:6px;top:552px;width:1px;height:25px;background:#c4eaea"></div><div style="left:87px;top:552px;width:1px;height:25px;background:#c4eaea"></div><div style="left:6px;top:578px;width:1px;height:25px;background:#c4eaea"></div><div style="left:87px;top:578px;width:1px;height:25px;background:#c4eaea"></div><div style="left:6px;top:604px;width:1px;height:25px;background:#c4eaea"></div><div style="left:87px;top:604px;width:1px;height:25px;background:#c4eaea"></div><div style="left:6px;top:630px;width:1px;height:25px;background:#c4eaea"></div><div style="left:87px;top:630px;width:1px;height:25px;background:#c4eaea"></div><div style="left:6px;top:656px;width:1px;height:25px;background:#c4eaea"></div><div style="left:87px;top:656px;width:1px;height:25px;background:#c4eaea"></div><div style="left:6px;top:682px;width:1px;height:25px;background:#c4e2d2"></div><div style="left:87px;top:682px;width:1px;height:25px;background:#c4e2d2"></div><div style="left:7px;top:447px;width:80px;height:1px;background:#c8e4d6"></div><div style="left:7px;top:707px;width:80px;height:1px;background:#c8e4d6"></div><div class="c" style="left:6px;top:410px;width:81px;height:39px;line-height:39px;color:#333;font-size:12px;">类型</div><div class="c" style="left:87px;top:410px;width:81px;height:39px;line-height:39px;color:#333;font-size:12px;">日期</div><div class="c" style="left:168px;top:410px;width:80px;height:39px;line-height:39px;color:#333;font-size:12px;">主场</div><div class="c" style="left:248px;top:410px;width:97px;height:39px;line-height:39px;color:#333;font-size:12px;">比分(半场)</div><div class="c" style="left:345px;top:410px;width:40px;height:39px;line-height:39px;color:#333;font-size:12px;">角球</div><div class="c" style="left:385px;top:410px;width:93px;height:39px;line-height:39px;color:#333;font-size:12px;">客场</div><div class="c" style="left:478px;top:430px;width:55px;height:19px;line-height:19px;color:#333;font-size:12px;">主</div><div class="c" style="left:533px;top:430px;width:85px;height:19px;line-height:19px;color:#333;font-size:12px;">让球</div><div class="c" style="left:618px;top:430px;width:57px;height:19px;line-height:19px;color:#333;font-size:12px;">客</div><div class="c" style="left:675px;top:430px;width:71px;height:19px;line-height:19px;color:#333;font-size:12px;">主</div><div class="c" style="left:746px;top:430px;width:71px;height:19px;line-height:19px;color:#333;font-size:12px;">和</div><div class="c" style="left:817px;top:430px;width:72px;height:19px;line-height:19px;color:#333;font-size:12px;">客</div><div class="c" style="left:889px;top:430px;width:41px;height:19px;line-height:19px;color:#333;font-size:12px;">胜负</div><div class="c" style="left:930px;top:430px;width:41px;height:19px;line-height:19px;color:#333;font-size:12px;">让球</div><div class="c" style="left:971px;top:430px;width:62px;height:19px;line-height:19px;color:#333;font-size:12px;">进球数</div><div class="sel" style="left:517px;top:409px;width:61px;height:19px;"><span class="st" style="font-size:13px;line-height:17px">Crow*</span><svg class="chev" width="10" height="7" viewBox="0 0 10 7" style="position:absolute;right:4px;top:5px"><path d="M1 1.3 L5 5.3 L9 1.3" stroke="#111" stroke-width="2.2" fill="none"/></svg></div><div class="sel" style="left:585px;top:409px;width:51px;height:19px;"><span class="st" style="font-size:13px;line-height:17px">终指</span><svg class="chev" width="10" height="7" viewBox="0 0 10 7" style="position:absolute;right:4px;top:5px"><path d="M1 1.3 L5 5.3 L9 1.3" stroke="#111" stroke-width="2.2" fill="none"/></svg></div><div class="sel" style="left:718px;top:409px;width:70px;height:19px;"><span class="st" style="font-size:13px;line-height:17px">平均值</span><svg class="chev" width="10" height="7" viewBox="0 0 10 7" style="position:absolute;right:4px;top:5px"><path d="M1 1.3 L5 5.3 L9 1.3" stroke="#111" stroke-width="2.2" fill="none"/></svg></div><div class="sel" style="left:795px;top:409px;width:51px;height:19px;"><span class="st" style="font-size:13px;line-height:17px">终指</span><svg class="chev" width="10" height="7" viewBox="0 0 10 7" style="position:absolute;right:4px;top:5px"><path d="M1 1.3 L5 5.3 L9 1.3" stroke="#111" stroke-width="2.2" fill="none"/></svg></div><div class="sel" style="left:936px;top:409px;width:51px;height:19px;"><span class="st" style="font-size:13px;line-height:17px">全场</span><svg class="chev" width="10" height="7" viewBox="0 0 10 7" style="position:absolute;right:4px;top:5px"><path d="M1 1.3 L5 5.3 L9 1.3" stroke="#111" stroke-width="2.2" fill="none"/></svg></div><div class="c" style="left:6px;top:448px;width:81px;height:26px;line-height:26px;color:#fff;font-size:12px;-webkit-text-stroke:0.3px #fff;">西甲</div><div class="c" style="left:87px;top:448px;width:81px;height:26px;line-height:26px;color:#3a3a3a;font-size:12px;">24-08-24</div><div class="c" style="left:168px;top:448px;width:80px;height:26px;line-height:26px;color:#3a3a3a;font-size:12px;">塞尔塔</div><div class="c" style="left:248px;top:448px;width:97px;height:26px;line-height:26px;color:#3a3a3a;font-size:12px;"><span style="color:#d41f1f">3-1</span>(2-1)</div><div class="c" style="left:345px;top:448px;width:40px;height:26px;line-height:26px;color:#3a3a3a;font-size:12px;">4-7</div><div class="c" style="left:385px;top:448px;width:93px;height:26px;line-height:26px;color:#3a3a3a;font-size:12px;"><span style="color:#2b851c">巴伦西亚</span></div><div class="c" style="left:478px;top:448px;width:55px;height:26px;line-height:26px;color:#3a3a3a;font-size:12px;">0.86</div><div class="c" style="left:533px;top:448px;width:85px;height:26px;line-height:26px;color:#3a3a3a;font-size:12px;">平/半</div><div class="c" style="left:618px;top:448px;width:57px;height:26px;line-height:26px;color:#3a3a3a;font-size:12px;">1.03</div><div class="c" style="left:675px;top:448px;width:71px;height:26px;line-height:26px;color:#3a3a3a;font-size:12px;">2.11</div><div class="c" style="left:746px;top:448px;width:71px;height:26px;line-height:26px;color:#3a3a3a;font-size:12px;">3.31</div><div class="c" style="left:817px;top:448px;width:72px;height:26px;line-height:26px;color:#3a3a3a;font-size:12px;">3.56</div><div class="c" style="left:889px;top:448px;width:41px;height:26px;line-height:26px;color:#1e1eb8;font-size:12px;">负</div><div class="c" style="left:930px;top:448px;width:41px;height:26px;line-height:26px;color:#1e1eb8;font-size:12px;">输</div><div class="c" style="left:971px;top:448px;width:62px;height:26px;line-height:26px;color:#d4261a;font-size:12px;">大</div><div class="c" style="left:6px;top:474px;width:81px;height:26px;line-height:26px;color:#fff;font-size:12px;-webkit-text-stroke:0.3px #fff;">西甲</div><div class="c" style="left:87px;top:474px;width:81px;height:26px;line-height:26px;color:#3a3a3a;font-size:12px;">24-08-18</div><div class="c" style="left:168px;top:474px;width:80px;height:26px;line-height:26px;color:#3a3a3a;font-size:12px;"><span style="color:#2b851c">巴伦西亚</span></div><div class="c" style="left:248px;top:474px;width:97px;height:26px;line-height:26px;color:#3a3a3a;font-size:12px;"><span style="color:#d41f1f">1-2</span>(1-1)</div><div class="c" style="left:345px;top:474px;width:40px;height:26px;line-height:26px;color:#3a3a3a;font-size:12px;">3-8</div><div class="c" style="left:385px;top:474px;width:93px;height:26px;line-height:26px;color:#3a3a3a;font-size:12px;">巴塞罗那</div><div class="c" style="left:478px;top:474px;width:55px;height:26px;line-height:26px;color:#3a3a3a;font-size:12px;">1.01</div><div class="c" style="left:533px;top:474px;width:85px;height:26px;line-height:26px;color:#3a3a3a;font-size:12px;">受半球</div><div class="c" style="left:618px;top:474px;width:57px;height:26px;line-height:26px;color:#3a3a3a;font-size:12px;">0.88</div><div class="c" style="left:675px;top:474px;width:71px;height:26px;line-height:26px;color:#3a3a3a;font-size:12px;">4.54</div><div class="c" style="left:746px;top:474px;width:71px;height:26px;line-height:26px;color:#3a3a3a;font-size:12px;">3.80</div><div class="c" style="left:817px;top:474px;width:72px;height:26px;line-height:26px;color:#3a3a3a;font-size:12px;">1.75</div><div class="c" style="left:889px;top:474px;width:41px;height:26px;line-height:26px;color:#1e1eb8;font-size:12px;">负</div><div class="c" style="left:930px;top:474px;width:41px;height:26px;line-height:26px;color:#1e1eb8;font-size:12px;">输</div><div class="c" style="left:971px;top:474px;width:62px;height:26px;line-height:26px;color:#d4261a;font-size:12px;">大</div><div class="c" style="left:6px;top:500px;width:81px;height:26px;line-height:26px;color:#fff;font-size:12px;-webkit-text-stroke:0.3px #fff;">球会友谊</div><div class="c" style="left:87px;top:500px;width:81px;height:26px;line-height:26px;color:#3a3a3a;font-size:12px;">24-08-11</div><div class="c" style="left:168px;top:500px;width:80px;height:26px;line-height:26px;color:#3a3a3a;font-size:12px;"><span style="color:#2b851c">巴伦西亚</span></div><div class="c" style="left:248px;top:500px;width:97px;height:26px;line-height:26px;color:#3a3a3a;font-size:12px;"><span style="color:#d41f1f">3-2</span>(2-1)</div><div class="c" style="left:345px;top:500px;width:40px;height:26px;line-height:26px;color:#3a3a3a;font-size:12px;">5-5</div><div class="c" style="left:385px;top:500px;width:93px;height:26px;line-height:26px;color:#3a3a3a;font-size:12px;">法兰克福</div><div class="c" style="left:478px;top:500px;width:55px;height:26px;line-height:26px;color:#3a3a3a;font-size:12px;">0.92</div><div class="c" style="left:533px;top:500px;width:85px;height:26px;line-height:26px;color:#3a3a3a;font-size:12px;">平/半</div><div class="c" style="left:618px;top:500px;width:57px;height:26px;line-height:26px;color:#3a3a3a;font-size:12px;">0.90</div><div class="c" style="left:675px;top:500px;width:71px;height:26px;line-height:26px;color:#3a3a3a;font-size:12px;">2.20</div><div class="c" style="left:746px;top:500px;width:71px;height:26px;line-height:26px;color:#3a3a3a;font-size:12px;">3.42</div><div class="c" style="left:817px;top:500px;width:72px;height:26px;line-height:26px;color:#3a3a3a;font-size:12px;">2.90</div><div class="c" style="left:889px;top:500px;width:41px;height:26px;line-height:26px;color:#d4261a;font-size:12px;">胜</div><div class="c" style="left:930px;top:500px;width:41px;height:26px;line-height:26px;color:#d4261a;font-size:12px;">赢</div><div class="c" style="left:971px;top:500px;width:62px;height:26px;line-height:26px;color:#d4261a;font-size:12px;">大</div><div class="c" style="left:6px;top:526px;width:81px;height:26px;line-height:26px;color:#fff;font-size:12px;-webkit-text-stroke:0.3px #fff;">球会友谊</div><div class="c" style="left:87px;top:526px;width:81px;height:26px;line-height:26px;color:#3a3a3a;font-size:12px;">24-08-03</div><div class="c" style="left:168px;top:526px;width:80px;height:26px;line-height:26px;color:#3a3a3a;font-size:12px;">利兹联</div><div class="c" style="left:248px;top:526px;width:97px;height:26px;line-height:26px;color:#3a3a3a;font-size:12px;"><span style="color:#d41f1f">2-1</span>(2-0)</div><div class="c" style="left:345px;top:526px;width:40px;height:26px;line-height:26px;color:#3a3a3a;font-size:12px;">7-2</div><div class="c" style="left:385px;top:526px;width:93px;height:26px;line-height:26px;color:#3a3a3a;font-size:12px;"><span style="color:#2b851c">巴伦西亚</span><span class="badge">1</span></div><div class="c" style="left:478px;top:526px;width:55px;height:26px;line-height:26px;color:#3a3a3a;font-size:12px;">1.00</div><div class="c" style="left:533px;top:526px;width:85px;height:26px;line-height:26px;color:#3a3a3a;font-size:12px;">半球</div><div class="c" style="left:618px;top:526px;width:57px;height:26px;line-height:26px;color:#3a3a3a;font-size:12px;">0.82</div><div class="c" style="left:675px;top:526px;width:71px;height:26px;line-height:26px;color:#3a3a3a;font-size:12px;">2.14</div><div class="c" style="left:746px;top:526px;width:71px;height:26px;line-height:26px;color:#3a3a3a;font-size:12px;">3.47</div><div class="c" style="left:817px;top:526px;width:72px;height:26px;line-height:26px;color:#3a3a3a;font-size:12px;">2.98</div><div class="c" style="left:889px;top:526px;width:41px;height:26px;line-height:26px;color:#1e1eb8;font-size:12px;">负</div><div class="c" style="left:930px;top:526px;width:41px;height:26px;line-height:26px;color:#1e1eb8;font-size:12px;">输</div><div class="c" style="left:971px;top:526px;width:62px;height:26px;line-height:26px;color:#178a17;font-size:12px;">走</div><div class="c" style="left:6px;top:552px;width:81px;height:26px;line-height:26px;color:#fff;font-size:12px;-webkit-text-stroke:0.3px #fff;">球会友谊</div><div class="c" style="left:87px;top:552px;width:81px;height:26px;line-height:26px;color:#3a3a3a;font-size:12px;">24-08-01</div><div class="c" style="left:168px;top:552px;width:80px;height:26px;line-height:26px;color:#3a3a3a;font-size:12px;"><span style="color:#2b851c">巴伦西亚</span></div><div class="c" style="left:248px;top:552px;width:97px;height:26px;line-height:26px;color:#3a3a3a;font-size:12px;"><span style="color:#d41f1f">0-0</span>(0-0)</div><div class="c" style="left:345px;top:552px;width:40px;height:26px;line-height:26px;color:#3a3a3a;font-size:12px;">7-2</div><div class="c" style="left:385px;top:552px;width:93px;height:26px;line-height:26px;color:#3a3a3a;font-size:12px;">莱万特</div><div class="c" style="left:478px;top:552px;width:55px;height:26px;line-height:26px;color:#3a3a3a;font-size:12px;">0.98</div><div class="c" style="left:533px;top:552px;width:85px;height:26px;line-height:26px;color:#3a3a3a;font-size:12px;">平/半</div><div class="c" style="left:618px;top:552px;width:57px;height:26px;line-height:26px;color:#3a3a3a;font-size:12px;">0.84</div><div class="c" style="left:675px;top:552px;width:71px;height:26px;line-height:26px;color:#3a3a3a;font-size:12px;">1.97</div><div class="c" style="left:746px;top:552px;width:71px;height:26px;line-height:26px;color:#3a3a3a;font-size:12px;">3.40</div><div class="c" style="left:817px;top:552px;width:72px;height:26px;line-height:26px;color:#3a3a3a;font-size:12px;">3.61</div><div class="c" style="left:889px;top:552px;width:41px;height:26px;line-height:26px;color:#178a17;font-size:12px;">平</div><div class="c" style="left:930px;top:552px;width:41px;height:26px;line-height:26px;color:#1e1eb8;font-size:12px;">输</div><div class="c" style="left:971px;top:552px;width:62px;height:26px;line-height:26px;color:#1e1eb8;font-size:12px;">小</div><div class="c" style="left:6px;top:578px;width:81px;height:26px;line-height:26px;color:#fff;font-size:12px;-webkit-text-stroke:0.3px #fff;">球会友谊</div><div class="c" style="left:87px;top:578px;width:81px;height:26px;line-height:26px;color:#3a3a3a;font-size:12px;">24-07-27</div><div class="c" style="left:168px;top:578px;width:80px;height:26px;line-height:26px;color:#3a3a3a;font-size:12px;">埃因霍温</div><div class="c" style="left:248px;top:578px;width:97px;height:26px;line-height:26px;color:#3a3a3a;font-size:12px;"><span style="color:#d41f1f">2-1</span>(2-1)</div><div class="c" style="left:345px;top:578px;width:40px;height:26px;line-height:26px;color:#3a3a3a;font-size:12px;">4-4</div><div class="c" style="left:385px;top:578px;width:93px;height:26px;line-height:26px;color:#3a3a3a;font-size:12px;"><span style="color:#2b851c">巴伦西亚</span></div><div class="c" style="left:478px;top:578px;width:55px;height:26px;line-height:26px;color:#3a3a3a;font-size:12px;">1.02</div><div class="c" style="left:533px;top:578px;width:85px;height:26px;line-height:26px;color:#3a3a3a;font-size:12px;">一球</div><div class="c" style="left:618px;top:578px;width:57px;height:26px;line-height:26px;color:#3a3a3a;font-size:12px;">0.80</div><div class="c" style="left:675px;top:578px;width:71px;height:26px;line-height:26px;color:#3a3a3a;font-size:12px;">1.69</div><div class="c" style="left:746px;top:578px;width:71px;height:26px;line-height:26px;color:#3a3a3a;font-size:12px;">3.83</div><div class="c" style="left:817px;top:578px;width:72px;height:26px;line-height:26px;color:#3a3a3a;font-size:12px;">4.25</div><div class="c" style="left:889px;top:578px;width:41px;height:26px;line-height:26px;color:#1e1eb8;font-size:12px;">负</div><div class="c" style="left:930px;top:578px;width:41px;height:26px;line-height:26px;color:#178a17;font-size:12px;">走</div><div class="c" style="left:971px;top:578px;width:62px;height:26px;line-height:26px;color:#d4261a;font-size:12px;">大</div><div class="c" style="left:6px;top:604px;width:81px;height:26px;line-height:26px;color:#fff;font-size:12px;-webkit-text-stroke:0.3px #fff;">球会友谊</div><div class="c" style="left:87px;top:604px;width:81px;height:26px;line-height:26px;color:#3a3a3a;font-size:12px;">24-07-25</div><div class="c" style="left:168px;top:604px;width:80px;height:26px;line-height:26px;color:#3a3a3a;font-size:12px;"><span style="color:#2b851c">巴伦西亚</span></div><div class="c" style="left:248px;top:604px;width:97px;height:26px;line-height:26px;color:#3a3a3a;font-size:12px;"><span style="color:#d41f1f">0-1</span>(0-0)</div><div class="c" style="left:345px;top:604px;width:40px;height:26px;line-height:26px;color:#3a3a3a;font-size:12px;">0-0</div><div class="c" style="left:385px;top:604px;width:93px;height:26px;line-height:26px;color:#3a3a3a;font-size:12px;">阿拉维斯</div><div class="c" style="left:675px;top:604px;width:71px;height:26px;line-height:26px;color:#3a3a3a;font-size:12px;">2.20</div><div class="c" style="left:746px;top:604px;width:71px;height:26px;line-height:26px;color:#3a3a3a;font-size:12px;">3.49</div><div class="c" style="left:817px;top:604px;width:72px;height:26px;line-height:26px;color:#3a3a3a;font-size:12px;">2.85</div><div class="c" style="left:889px;top:604px;width:41px;height:26px;line-height:26px;color:#1e1eb8;font-size:12px;">负</div><div class="c" style="left:6px;top:630px;width:81px;height:26px;line-height:26px;color:#fff;font-size:12px;-webkit-text-stroke:0.3px #fff;">球会友谊</div><div class="c" style="left:87px;top:630px;width:81px;height:26px;line-height:26px;color:#3a3a3a;font-size:12px;">24-07-21</div><div class="c" style="left:168px;top:630px;width:80px;height:26px;line-height:26px;color:#3a3a3a;font-size:12px;"><span style="color:#2b851c">巴伦西亚</span></div><div class="c" style="left:248px;top:630px;width:97px;height:26px;line-height:26px;color:#3a3a3a;font-size:12px;"><span style="color:#d41f1f">0-0</span>(0-0)</div><div class="c" style="left:345px;top:630px;width:40px;height:26px;line-height:26px;color:#3a3a3a;font-size:12px;">2-2</div><div class="c" style="left:385px;top:630px;width:93px;height:26px;line-height:26px;color:#3a3a3a;font-size:12px;">卡斯迪隆</div><div class="c" style="left:478px;top:630px;width:55px;height:26px;line-height:26px;color:#3a3a3a;font-size:12px;">0.85</div><div class="c" style="left:533px;top:630px;width:85px;height:26px;line-height:26px;color:#3a3a3a;font-size:12px;">半球</div><div class="c" style="left:618px;top:630px;width:57px;height:26px;line-height:26px;color:#3a3a3a;font-size:12px;">0.97</div><div class="c" style="left:675px;top:630px;width:71px;height:26px;line-height:26px;color:#3a3a3a;font-size:12px;">1.46</div><div class="c" style="left:746px;top:630px;width:71px;height:26px;line-height:26px;color:#3a3a3a;font-size:12px;">4.41</div><div class="c" style="left:817px;top:630px;width:72px;height:26px;line-height:26px;color:#3a3a3a;font-size:12px;">5.60</div><div class="c" style="left:889px;top:630px;width:41px;height:26px;line-height:26px;color:#178a17;font-size:12px;">平</div><div class="c" style="left:930px;top:630px;width:41px;height:26px;line-height:26px;color:#1e1eb8;font-size:12px;">输</div><div class="c" style="left:971px;top:630px;width:62px;height:26px;line-height:26px;color:#1e1eb8;font-size:12px;">小</div><div class="c" style="left:6px;top:656px;width:81px;height:26px;line-height:26px;color:#fff;font-size:12px;-webkit-text-stroke:0.3px #fff;">球会友谊</div><div class="c" style="left:87px;top:656px;width:81px;height:26px;line-height:26px;color:#3a3a3a;font-size:12px;">24-05-29</div><div class="c" style="left:168px;top:656px;width:80px;height:26px;line-height:26px;color:#3a3a3a;font-size:12px;">本尼度</div><div class="c" style="left:248px;top:656px;width:97px;height:26px;line-height:26px;color:#3a3a3a;font-size:12px;"><span style="color:#d41f1f">1-3</span>(0-2)</div><div class="c" style="left:345px;top:656px;width:40px;height:26px;line-height:26px;color:#3a3a3a;font-size:12px;">4-1</div><div class="c" style="left:385px;top:656px;width:93px;height:26px;line-height:26px;color:#3a3a3a;font-size:12px;"><span style="color:#2b851c">巴伦西亚</span></div><div class="c" style="left:889px;top:656px;width:41px;height:26px;line-height:26px;color:#d4261a;font-size:12px;">胜</div><div class="c" style="left:6px;top:682px;width:81px;height:26px;line-height:26px;color:#fff;font-size:12px;-webkit-text-stroke:0.3px #fff;">西甲</div><div class="c" style="left:87px;top:682px;width:81px;height:26px;line-height:26px;color:#3a3a3a;font-size:12px;">24-05-26</div><div class="c" style="left:168px;top:682px;width:80px;height:26px;line-height:26px;color:#3a3a3a;font-size:12px;">塞尔塔</div><div class="c" style="left:248px;top:682px;width:97px;height:26px;line-height:26px;color:#3a3a3a;font-size:12px;"><span style="color:#d41f1f">2-2</span>(0-1)</div><div class="c" style="left:345px;top:682px;width:40px;height:26px;line-height:26px;color:#3a3a3a;font-size:12px;">2-2</div><div class="c" style="left:385px;top:682px;width:93px;height:26px;line-height:26px;color:#3a3a3a;font-size:12px;"><span style="color:#2b851c">巴伦西亚</span></div><div class="c" style="left:478px;top:682px;width:55px;height:26px;line-height:26px;color:#3a3a3a;font-size:12px;">0.91</div><div class="c" style="left:533px;top:682px;width:85px;height:26px;line-height:26px;color:#3a3a3a;font-size:12px;">半球</div><div class="c" style="left:618px;top:682px;width:57px;height:26px;line-height:26px;color:#3a3a3a;font-size:12px;">0.97</div><div class="c" style="left:675px;top:682px;width:71px;height:26px;line-height:26px;color:#3a3a3a;font-size:12px;">1.92</div><div class="c" style="left:746px;top:682px;width:71px;height:26px;line-height:26px;color:#3a3a3a;font-size:12px;">3.60</div><div class="c" style="left:817px;top:682px;width:72px;height:26px;line-height:26px;color:#3a3a3a;font-size:12px;">3.88</div><div class="c" style="left:889px;top:682px;width:41px;height:26px;line-height:26px;color:#178a17;font-size:12px;">平</div><div class="c" style="left:930px;top:682px;width:41px;height:26px;line-height:26px;color:#d4261a;font-size:12px;">赢</div><div class="c" style="left:971px;top:682px;width:62px;height:26px;line-height:26px;color:#d4261a;font-size:12px;">大</div><div class="c" style="left:6px;top:708px;width:1028px;height:26px;line-height:26px;color:#3a3a3a;font-size:12px;letter-spacing:0.18px;">近<span style="color:#d41f1f">10</span>场,胜2平3负5, 胜率:<span style="color:#d41f1f">20%</span> 让胜率:<span style="color:#d41f1f">25%</span> 大率:<span style="color:#d41f1f">62.5%</span> 单率:<span style="color:#d41f1f">50%</span></div></body></html>
